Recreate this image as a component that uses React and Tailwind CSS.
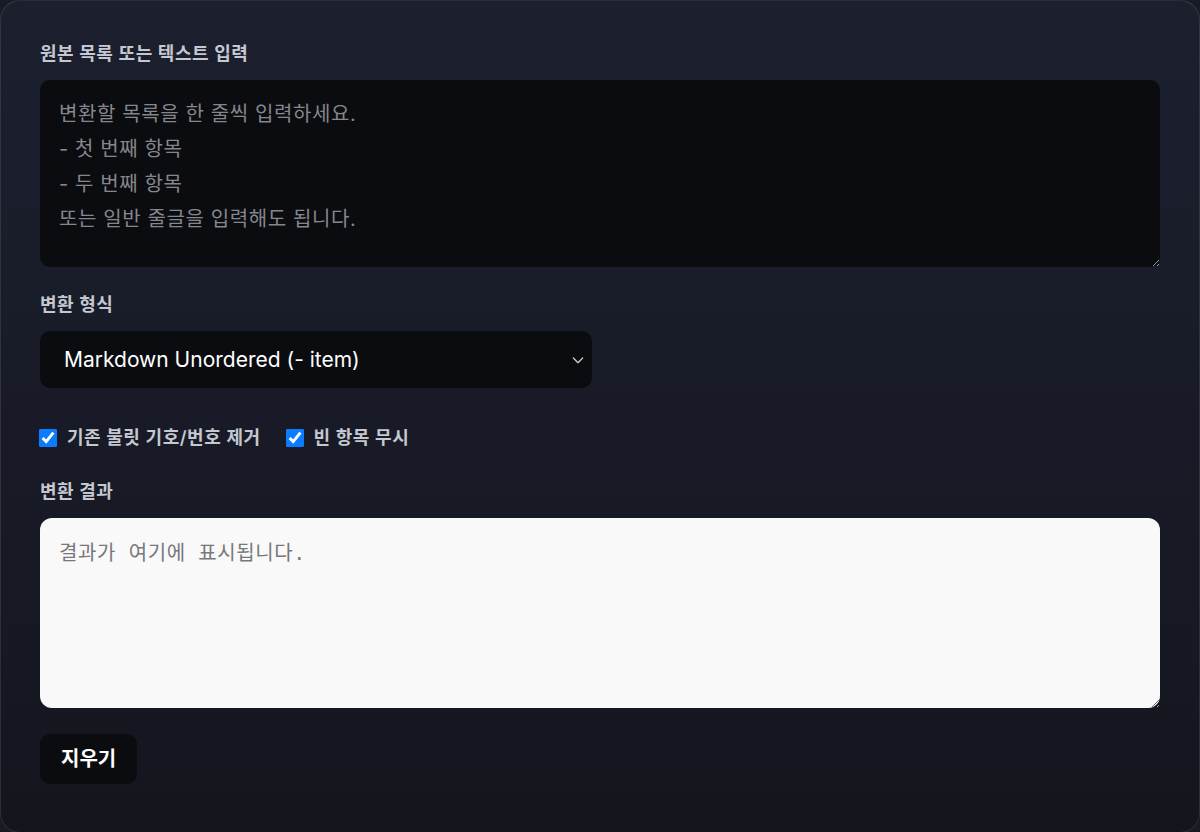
import { useState } from 'react';

const FORMATS = [
    'Markdown Unordered (- item)',
    'Markdown Ordered (1. item)',
    'HTML <ul>',
    'HTML <ol>',
    'Comma separated',
];

export default function App() {
    const [source, setSource] = useState('');
    const [format, setFormat] = useState(FORMATS[0]);
    const [stripBullets, setStripBullets] = useState(true);
    const [skipEmpty, setSkipEmpty] = useState(true);

    return (
        <div
            className="min-h-screen bg-[#181a26]"
            style={{ fontFamily: 'Inter, "Noto Sans CJK KR", sans-serif' }}
        >
            <div className="min-h-[832px] rounded-[20px] border border-white/10 bg-gradient-to-b from-[#1c1f2e] via-[#181b27] to-[#14161e] px-[39px] pt-[41px] pb-12">
                <label className="block text-[18px] leading-[24px] tracking-[0.03em] font-semibold text-[#c5c8d0] mb-[14px]">
                    원본 목록 또는 텍스트 입력
                </label>
                <textarea
                    value={source}
                    onChange={(e) => setSource(e.target.value)}
                    placeholder={'변환할 목록을 한 줄씩 입력하세요.\n- 첫 번째 항목\n- 두 번째 항목\n또는 일반 줄글을 입력해도 됩니다.'}
                    className="block w-full h-[187px] rounded-[10px] bg-[#0b0c10] px-[19px] py-[17px] text-[20px] leading-[35px] tracking-[0.03em] text-white placeholder:text-[#85878d] outline-none"
                />

                <label className="block mt-[26px] text-[18px] leading-[24px] tracking-[0.03em] font-semibold text-[#c5c8d0] mb-[14px]">
                    변환 형식
                </label>
                <div className="relative w-[552px]">
                    <select
                        value={format}
                        onChange={(e) => setFormat(e.target.value)}
                        className="block w-full h-[57px] appearance-none rounded-[10px] bg-[#0b0c10] pl-6 pr-10 text-[21px] text-white outline-none"
                    >
                        {FORMATS.map((f) => (
                            <option key={f} value={f}>{f}</option>
                        ))}
                    </select>
                    <svg
                        className="pointer-events-none absolute right-[6px] top-1/2 -translate-y-1/2 w-[16px] h-[16px] text-[#c9cbd1]"
                        fill="none"
                        stroke="currentColor"
                        viewBox="0 0 24 24"
                    >
                        <path strokeLinecap="round" strokeLinejoin="round" strokeWidth="2" d="M5 9l7 7 7-7" />
                    </svg>
                </div>

                <div className="flex items-center gap-[25px] mt-[38px] leading-[24px]">
                    <label className="flex items-center gap-[10px] text-[18px] tracking-[0.03em] font-semibold text-[#c5c8d0]">
                        <input
                            type="checkbox"
                            checked={stripBullets}
                            onChange={(e) => setStripBullets(e.target.checked)}
                            className="w-[18px] h-[18px] m-0 -ml-px accent-[#0a7cff]"
                        />
                        기존 불릿 기호/번호 제거
                    </label>
                    <label className="flex items-center gap-[10px] text-[18px] tracking-[0.03em] font-semibold text-[#c5c8d0]">
                        <input
                            type="checkbox"
                            checked={skipEmpty}
                            onChange={(e) => setSkipEmpty(e.target.checked)}
                            className="w-[18px] h-[18px] m-0 accent-[#0a7cff]"
                        />
                        빈 항목 무시
                    </label>
                </div>

                <label className="block mt-[30px] text-[18px] leading-[24px] tracking-[0.03em] font-semibold text-[#c5c8d0] mb-[14px]">
                    변환 결과
                </label>
                <textarea
                    readOnly
                    placeholder="결과가 여기에 표시됩니다."
                    className="block w-full h-[190px] rounded-[12px] bg-[#f9f9f9] px-[19px] py-[19px] text-[20px] leading-[32px] tracking-[0.03em] text-[#222] placeholder:text-[#77787b] outline-none"
                    style={{ fontFamily: '"DejaVu Sans Mono", "Noto Sans CJK KR", monospace' }}
                />

                <button
                    type="button"
                    onClick={() => setSource('')}
                    className="mt-[26px] h-[50px] px-[21px] rounded-[10px] bg-[#0b0c10] text-[20px] font-bold text-white"
                >
                    지우기
                </button>
            </div>
        </div>
    );
}
